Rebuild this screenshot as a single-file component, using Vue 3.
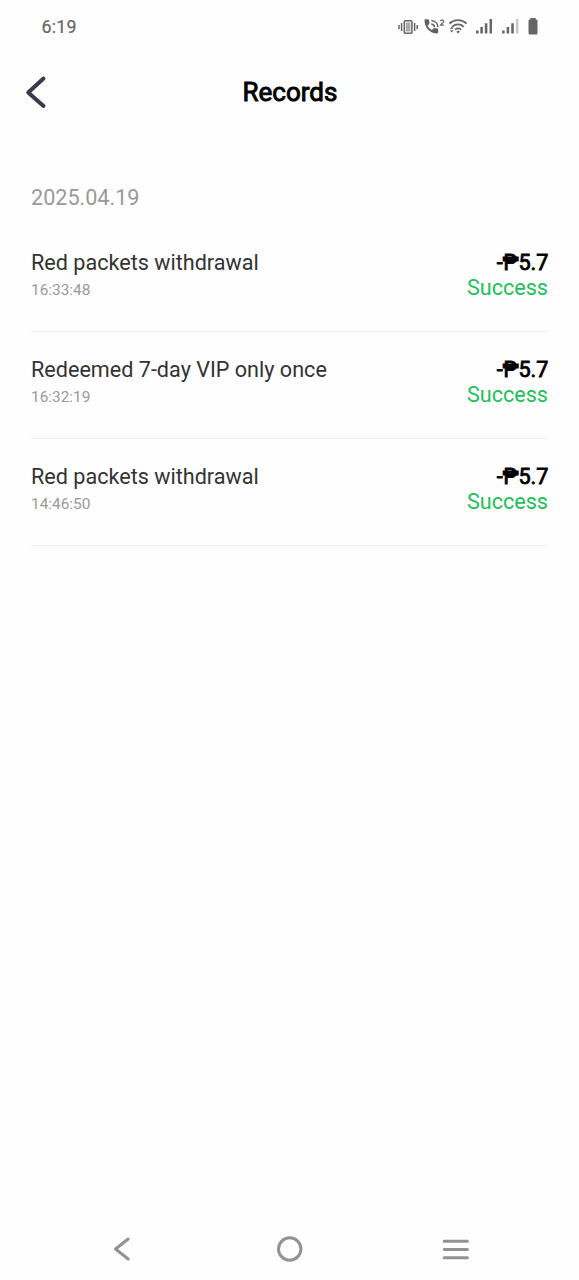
<script setup>
const records = [
  { title: 'Red packets withdrawal', time: '16:33:48', amount: '5.7', status: 'Success' },
  { title: 'Redeemed 7-day VIP only once', time: '16:32:19', amount: '5.7', status: 'Success' },
  { title: 'Red packets withdrawal', time: '14:46:50', amount: '5.7', status: 'Success' },
]
</script>

<template>
  <div class="screen">
    <div class="status-bar">
      <span class="clock">6:19</span>
      <svg class="status-icons" width="144" height="24" viewBox="0 0 144 24" fill="none">
        <g stroke="#666" stroke-width="1.5">
          <rect x="7.3" y="5.8" width="7.6" height="12.4" rx=".8" />
          <rect x="9.3" y="8" width="3.6" height="8" fill="#aaa" stroke="#aaa" stroke-width="1" />
          <path d="M4.6 8v8M2 10v4.2M17.600 8v8M20.200 10v4.2" />
        </g>
        <g transform="translate(2.2 0)">
          <path d="M25.3 5.4c0-.7.5-1.2 1.2-1.2h2.2c.6 0 1 .4 1.100 1l.5 2.700c.1.4-.1.8-.4 1.100l-1.500 1.400c1 2 2.500 3.500 4.400 4.500l1.400-1.500c.3-.3.7-.4 1.100-.4l2.800.6c.5.1.9.5.9 1v2.600c0 .7-.5 1.200-1.200 1.200C30.900 18.400 25.300 12.400 25.300 5.400z" fill="#626262" />
          <path d="M32 8.900c2 .2 3.200 1.500 3.300 3.200M32.100 5.500c3.800.2 6.400 2.900 6.500 6.500" stroke="#626262" stroke-width="1.5" />
          <path d="M41.300 6.300c0-1.800 3.200-1.800 3.200.1 0 1.400-3.100 2.600-3.200 3.800h3.500" stroke="#666" stroke-width="1.200" />
        </g>
        <g transform="translate(2.7 0)">
          <path d="M49.700 8.500c5-4.500 12.200-4.500 17.200 0M52.500 11.700c3.500-3 8.100-3 11.600 0M55.400 14.600c1.900-1.500 4.100-1.500 6 0" stroke="#666" stroke-width="1.800" />
          <path d="M58.400 15.400l1.800 1.400-1.800 1.600-1.800-1.600zM50.200 13.900l1.800-2.300 1.800 2.300zM50.200 15.200l1.800 2.300 1.800-2.300z" fill="#666" />
        </g>
        <g transform="translate(2.6 0)" stroke="#666" stroke-width="2.500">
          <path d="M77.700 15.500V18.600M82 12V18.600M86.500 8.300V18.600M91.200 4V18.600" />
          <path d="M103.800 15.500V18.600M108.300 12V18.600M112.900 8.300V18.600" />
          <path d="M117.600 4V18.600" stroke="#c8c8c8" />
        </g>
        <path d="M133.300 3h5.400v1.400h.6q1.200 0 1.200 1.200v12.400q0 1.500-1.500 1.500h-6q-1.500 0-1.500-1.500V5.600q0-1.200 1.200-1.200h.6z" fill="#666" />
      </svg>
    </div>

    <header class="nav">
      <svg class="back" width="24" height="36" viewBox="0 0 24 36" fill="none">
        <path d="M19.500 4.600L4.200 18.500L19.500 32" stroke="#3b394a" stroke-width="4" stroke-linecap="round" stroke-linejoin="round" />
      </svg>
      <h1 class="heading">Records</h1>
      <span class="nav-end"></span>
    </header>

    <main class="content">
      <div class="date">2025.04.19</div>
      <div v-for="(item, i) in records" :key="i" class="record">
        <div class="info">
          <div class="title">{{ item.title }}</div>
          <div class="time">{{ item.time }}</div>
        </div>
        <div class="result">
          <div class="amount">-<span class="peso">₱</span>{{ item.amount }}</div>
          <div class="status">{{ item.status }}</div>
        </div>
      </div>
    </main>

    <footer class="system-nav">
      <svg width="30" height="30" viewBox="0 0 30 30" fill="none">
        <path d="M21.200 5L8.500 15L21.200 25" stroke="#929292" stroke-width="3" stroke-linecap="round" stroke-linejoin="round" />
      </svg>
      <svg width="30" height="30" viewBox="0 0 30 30" fill="none">
        <circle cx="15.700" cy="15" r="11.200" stroke="#929292" stroke-width="3" />
      </svg>
      <svg width="30" height="30" viewBox="0 0 30 30" fill="none">
        <path d="M3.200 7.200H26.400M3.200 15.500H26.400M3.200 23.700H26.400" stroke="#929292" stroke-width="3" stroke-linecap="round" />
      </svg>
    </footer>
  </div>
</template>

<style>
body {
  margin: 0;
  background: #fefefe;
}
</style>

<style scoped>
.screen {
  width: 579px;
  height: 1280px;
  display: flex;
  flex-direction: column;
  background: #fefefe;
  font-family: Roboto, "Liberation Sans", sans-serif;
  overflow: hidden;
}
.status-bar {
  height: 54px;
  box-sizing: border-box;
  padding: 0 38px 0 41.400px;
  display: flex;
  align-items: center;
  justify-content: space-between;
}
.clock {
  font-size: 17.800px;
  line-height: 24px;
  letter-spacing: 0.3px;
  color: #666;
  -webkit-text-stroke: 0.2px #666;
}
.status-icons {
  margin-bottom: 1px;
}
.nav {
  height: 76px;
  box-sizing: border-box;
  padding: 0 22px 0 24px;
  display: flex;
  align-items: center;
  justify-content: space-between;
}
.nav-end {
  width: 25px;
}
.heading {
  margin: 0;
  font-size: 26px;
  line-height: 32px;
  font-weight: 400;
  color: #000;
  -webkit-text-stroke: 0.9px #000;
}
.content {
  padding: 54px 31px 0;
  flex: 1;
}
.date {
  height: 41.500px;
  font-size: 21.600px;
  line-height: 28px;
  color: #999;
}
.record {
  height: 106.800px;
  box-sizing: border-box;
  padding-top: 23.600px;
  display: flex;
  justify-content: space-between;
  border-bottom: 1px solid #f0f0f0;
}
.title {
  font-size: 21.600px;
  line-height: 28px;
  color: #333;
}
.time {
  margin-top: 2px;
  font-size: 15.400px;
  line-height: 22px;
  color: #999;
}
.result {
  text-align: right;
}
.amount {
  padding-top: 1px;
  margin-right: -0.400px;
  font-size: 21.600px;
  line-height: 26px;
  color: #000;
  -webkit-text-stroke: 0.8px #000;
}
.status {
  font-size: 21.600px;
  line-height: 24px;
  color: #20c15a;
}
.system-nav {
  height: 62px;
  box-sizing: border-box;
  padding: 0 108px 0 107px;
  display: flex;
  align-items: center;
  justify-content: space-between;
}
</style>
